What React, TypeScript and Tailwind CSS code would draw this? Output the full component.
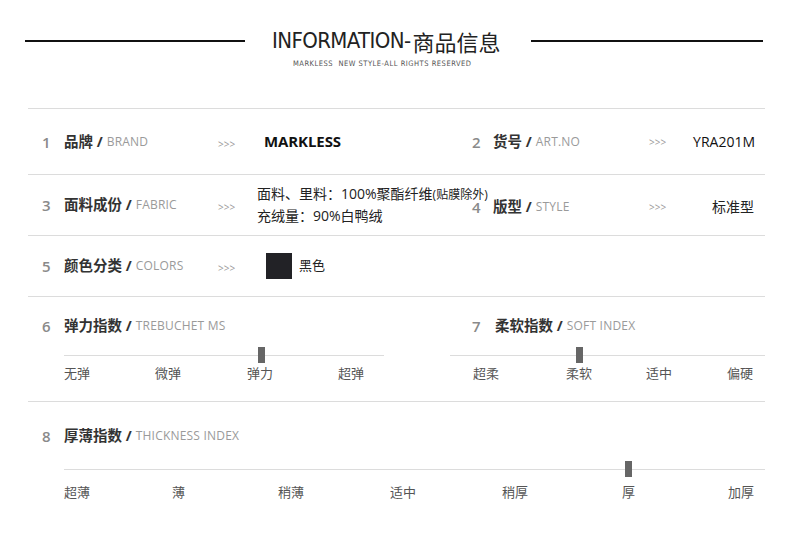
import React from "react";

const CJK = "font-['Open_Sans','Noto_Sans_CJK_SC',sans-serif]";

function Label({ num, zh, en, numW = "w-[22px]" }: { num: string; zh: string; en: string; numW?: string }) {
  return (
    <div className="flex items-center whitespace-nowrap">
      <span className={`${numW} shrink-0 text-[15px] font-semibold text-[#8a8a8a] leading-5`}>{num}</span>
      <span className="text-[14.5px] font-bold text-[#333] leading-5">{zh} /</span>
      <span className="ml-[4px] text-[12px] text-[#9a9a9a] leading-5 tracking-[0.2px]">{en}</span>
    </div>
  );
}

function Arrow() {
  return <span className="text-[10px] text-[#9a9a9a] leading-5">&gt;&gt;&gt;</span>;
}

function Marker({ left }: { left: number }) {
  return <div className="absolute top-[-8px] h-[16px] w-[7px] bg-[#666]" style={{ left }} />;
}

function Slider({
  width,
  marker,
  labels,
  gap,
}: {
  width: number | string;
  marker: number;
  labels: { t: string; ml: number }[];
  gap: string;
}) {
  return (
    <div>
      <div className="relative h-px bg-[#dcdcdc]" style={{ width }}>
        <Marker left={marker} />
      </div>
      <div className={`flex ${gap} whitespace-nowrap`}>
        {labels.map((l, i) => (
          <span key={i} className="text-[13px] text-[#555] leading-[18px]" style={{ marginLeft: l.ml }}>
            {l.t}
          </span>
        ))}
      </div>
    </div>
  );
}

export default function App() {
  return (
    <div className={`w-[790px] h-[535px] bg-white ${CJK} overflow-hidden`}>
      {/* header */}
      <div className="h-[108px] pt-[29px]">
        <div className="flex items-center">
          <div className="ml-[25px] w-[220px] h-[2px] bg-[#111]" />
          <div className="ml-[27px] flex items-center whitespace-nowrap text-[#222] leading-6">
            <span className="font-['Liberation_Sans_Narrow','DejaVu_Sans_Condensed',sans-serif] text-[22px] tracking-[-0.6px]">
              INFORMATION-
            </span>
            <span className="ml-[2px] font-['Noto_Sans_CJK_SC',sans-serif] text-[22px] font-normal">商品信息</span>
          </div>
          <div className="ml-[30px] w-[232px] h-[2px] bg-[#111]" />
        </div>
        <div className="mt-[6px] pl-[293px] text-[7.5px] text-[#555] leading-[10px] whitespace-nowrap tracking-[0.5px] font-['DejaVu_Sans_Condensed',sans-serif]">
          MARKLESS&nbsp; NEW STYLE-ALL RIGHTS RESERVED
        </div>
      </div>

      <div className="ml-[28px] w-[737px]">
        {/* row 1 */}
        <div className="border-t border-b border-[#dcdcdc] h-[67px] flex items-center">
          <div className="w-[444px] shrink-0 pl-[14px] flex items-center">
            <div className="w-[176px] shrink-0">
              <Label num="1" zh="品牌" en="BRAND" />
            </div>
            <div className="w-[46px] shrink-0">
              <Arrow />
            </div>
            <span className="text-[15px] font-bold text-[#111] tracking-[-0.1px]">MARKLESS</span>
          </div>
          <div className="flex-1 flex items-center">
            <div className="w-[177px] shrink-0">
              <Label num="2" zh="货号" en="ART.NO" numW="w-[21px]" />
            </div>
            <Arrow />
            <span className="ml-auto mr-[10px] text-[14px] text-[#111]">YRA201M</span>
          </div>
        </div>

        {/* row 2 */}
        <div className="border-b border-[#dcdcdc] h-[61px] flex items-center">
          <div className="w-[444px] shrink-0 pl-[14px] flex items-center">
            <div className="w-[176px] shrink-0">
              <Label num="3" zh="面料成份" en="FABRIC" />
            </div>
            <div className="w-[39px] shrink-0">
              <Arrow />
            </div>
            <div className="shrink-0 text-[14px] text-[#222] leading-[21px] whitespace-nowrap mt-[-2px]">
              <div>
                面料、里料：100%聚酯纤维<span className="text-[12px]">(贴膜除外)</span>
              </div>
              <div>充绒量：90%白鸭绒</div>
            </div>
          </div>
          <div className="flex-1 flex items-center mt-[3px]">
            <div className="w-[177px] shrink-0">
              <Label num="4" zh="版型" en="STYLE" numW="w-[21px]" />
            </div>
            <Arrow />
            <span className="ml-auto mr-[11px] text-[14px] text-[#222]">标准型</span>
          </div>
        </div>

        {/* row 3 */}
        <div className="border-b border-[#dcdcdc] h-[61px] flex items-center">
          <div className="w-[444px] shrink-0 pl-[14px] flex items-center">
            <div className="w-[176px] shrink-0">
              <Label num="5" zh="颜色分类" en="COLORS" />
            </div>
            <div className="w-[48px] shrink-0">
              <Arrow />
            </div>
            <div className="w-[26px] h-[26px] shrink-0 bg-[#222226]" />
            <span className="ml-[7px] text-[13px] text-[#222]">黑色</span>
          </div>
        </div>

        {/* row 4 */}
        <div className="border-b border-[#dcdcdc] h-[105px] flex">
          <div className="w-[422px] shrink-0 pl-[14px] pt-[19px]">
            <Label num="6" zh="弹力指数" en="TREBUCHET MS" />
            <div className="ml-[22px] mt-[19px]">
              <Slider
                width={320}
                marker={194}
                gap="mt-[8px]"
                labels={[
                  { t: "无弹", ml: 0 },
                  { t: "微弹", ml: 65 },
                  { t: "弹力", ml: 66 },
                  { t: "超弹", ml: 65 },
                ]}
              />
            </div>
          </div>
          <div className="flex-1 pt-[19px]">
            <div className="pl-[22px]">
              <Label num="7" zh="柔软指数" en="SOFT INDEX" numW="w-[23px]" />
            </div>
            <div className="mt-[19px]">
              <Slider
                width={315}
                marker={126}
                gap="mt-[8px]"
                labels={[
                  { t: "超柔", ml: 23 },
                  { t: "柔软", ml: 67 },
                  { t: "适中", ml: 54 },
                  { t: "偏硬", ml: 55 },
                ]}
              />
            </div>
          </div>
        </div>

        {/* row 5 */}
        <div className="pl-[14px] pt-[24px]">
          <Label num="8" zh="厚薄指数" en="THICKNESS INDEX" />
          <div className="ml-[22px] mt-[23px]">
            <Slider
              width={701}
              marker={561}
              gap="mt-[13px]"
              labels={[
                { t: "超薄", ml: 0 },
                { t: "薄", ml: 82 },
                { t: "稍薄", ml: 93 },
                { t: "适中", ml: 86 },
                { t: "稍厚", ml: 86 },
                { t: "厚", ml: 94 },
                { t: "加厚", ml: 93 },
              ]}
            />
          </div>
        </div>
      </div>
    </div>
  );
}
